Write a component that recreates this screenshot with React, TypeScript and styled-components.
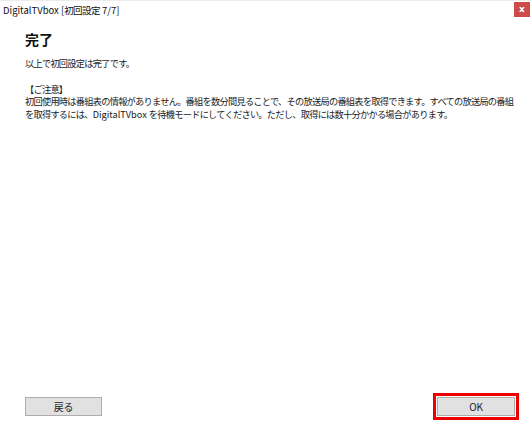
import React from "react";
import styled, { createGlobalStyle } from "styled-components";

const Global = createGlobalStyle`
  html, body { margin: 0; padding: 0; background: #fff; }
  body {
    font-family: "Noto Sans CJK JP", "Noto Sans", sans-serif;
    color: #222;
  }
`;

const Window = styled.div`
  width: 531px;
  height: 424px;
  box-sizing: border-box;
  border-top: 1px solid #ececec;
  background: #fff;
  display: flex;
  flex-direction: column;
`;

const TitleBar = styled.div`
  height: 20px;
  display: flex;
  align-items: center;
  justify-content: space-between;
  padding: 0 1px 0 3px;
`;

const TitleText = styled.span`
  font-size: 9.5px;
  line-height: 1;
  letter-spacing: -0.6px;
  color: #111;
`;

const Latin = styled.span<{ $ls?: number }>`
  letter-spacing: ${(p) => p.$ls ?? 0}px;
`;

const CloseButton = styled.div`
  width: 16px;
  height: 15px;
  margin-top: 1px;
  align-self: flex-start;
  background: #cc4b4b;
  color: #fff;
  font-family: "DejaVu Sans", sans-serif;
  font-size: 9px;
  font-weight: bold;
  display: flex;
  align-items: center;
  justify-content: center;
  line-height: 1;
`;

const Content = styled.div`
  flex: 1;
  padding: 7px 16px 0 25px;
  display: flex;
  flex-direction: column;
`;

const Heading = styled.h1`
  margin: 0;
  font-size: 14px;
  font-weight: 700;
  line-height: 22px;
  color: #111;
`;

const Paragraph = styled.p<{ $gap?: number }>`
  margin: ${(p) => p.$gap ?? 0}px 0 0;
  font-size: 9.2px;
  line-height: 12.5px;
  letter-spacing: -0.72px;
  color: #1a1a1a;
  white-space: nowrap;
`;

const Footer = styled.div`
  display: flex;
  justify-content: space-between;
  align-items: center;
  padding: 0 16px 8px 25px;
`;

const Button = styled.button<{ $highlight?: boolean }>`
  width: ${(p) => (p.$highlight ? 78 : 77)}px;
  height: 19px;
  box-sizing: border-box;
  border: 1px solid #adadad;
  background: #e1e1e1;
  font-family: "Noto Sans CJK JP", "Noto Sans", sans-serif;
  font-size: 10px;
  letter-spacing: -0.3px;
  color: #222;
  padding: 0;
  line-height: 1;
  outline: ${(p) => (p.$highlight ? "3px solid #ee0000" : "none")};
  outline-offset: 1px;
`;

export default function App() {
  return (
    <>
      <Global />
      <Window>
        <TitleBar>
          <TitleText>
            <Latin>DigitalTVbox [</Latin>初回設定<Latin> 7/7]</Latin>
          </TitleText>
          <CloseButton>x</CloseButton>
        </TitleBar>
        <Content>
          <Heading>完了</Heading>
          <Paragraph $gap={7}>以上で初回設定は完了です。</Paragraph>
          <Paragraph $gap={13}>
            【ご注意】
            <br />
            初回使用時は番組表の情報がありません。番組を数分間見ることで、その放送局の番組表を取得できます。すべての放送局の番組
            <br />
            を取得するには、<Latin>DigitalTVbox </Latin>を待機モードにしてください。ただし、取得には数十分かかる場合があります。
          </Paragraph>
        </Content>
        <Footer>
          <Button>戻る</Button>
          <Button $highlight>OK</Button>
        </Footer>
      </Window>
    </>
  );
}
